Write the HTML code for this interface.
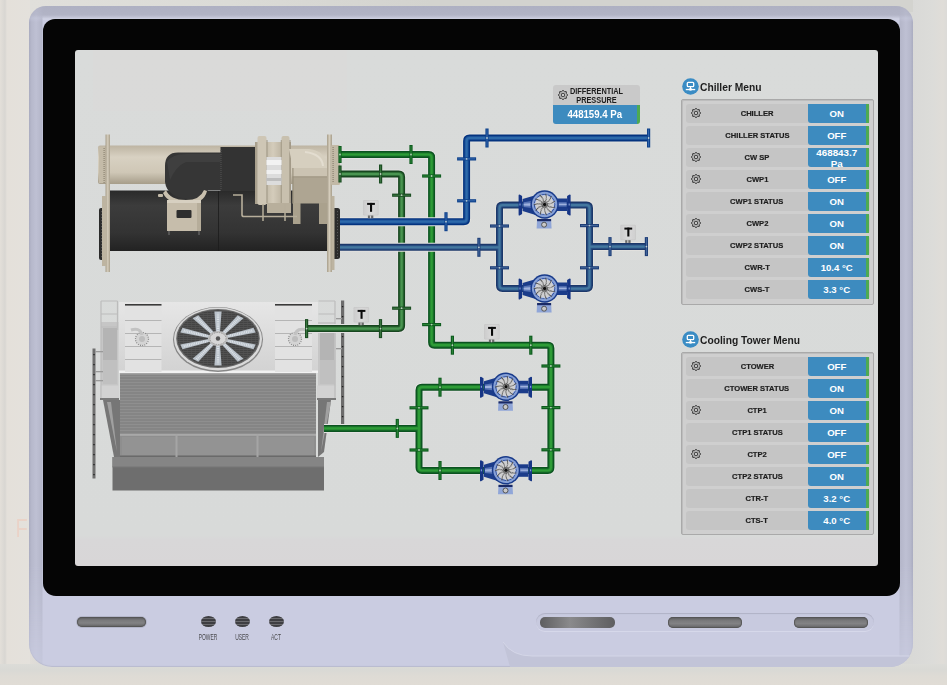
<!DOCTYPE html>
<html><head><meta charset="utf-8">
<style>
*{box-sizing:border-box}
html,body{margin:0;padding:0}
body{width:947px;height:685px;overflow:hidden;position:relative;background:#dcdcd8;font-family:"Liberation Sans",sans-serif}
.a{position:absolute}
.tbl{position:absolute;left:681px;width:193px;background:#cfcfcf;border:1px solid #a9a9a9;border-radius:2px;box-shadow:inset 1px 1px 0 #bdbdbd}
.row{position:absolute;left:4px;width:184px;height:19px;background:#c5c5c5;border-radius:3px}
.lbl{position:absolute;left:20px;width:102px;top:0.4px;height:19px;line-height:19px;text-align:center;font-size:7.9px;font-weight:bold;color:#1e1e1e;white-space:nowrap;-webkit-text-stroke:0.2px #1e1e1e}
.lbl span{display:inline-block;transform:scaleX(.96)}
.val{position:absolute;left:122px;top:0;width:57.5px;height:19px;background:#3d8bbf;border-radius:0 0 0 3px;color:#fff;font-weight:bold;font-size:9.6px;line-height:20px;text-align:center;overflow:hidden;white-space:nowrap}
.val.two{line-height:11.5px;padding-top:0;font-size:9.8px}
.strip{position:absolute;left:179.5px;top:0;width:3.5px;height:19px;background:#4eaa52}
.gear{position:absolute;left:3.5px;top:3.2px;width:12px;height:12px}
.hdr{position:absolute;left:682px;height:17px;font-size:10.8px;font-weight:bold;color:#1e1e1e;line-height:19px}
.hdr .ic{position:absolute;left:-0.5px;top:0;width:17px;height:17px}
.hdr span{position:absolute;left:18px;top:0;white-space:nowrap;display:inline-block;transform-origin:0 50%;transform:scaleX(.95)}
</style></head>
<body>
<!-- background -->
<div class="a" style="left:0;top:0;width:947px;height:685px;background:linear-gradient(90deg,#e2ded8 0,#e4e0da 24px,#dcdad6 40px,#d6d6d3 300px,#d8d8d5 880px,#dadad7 947px)"></div>
<div class="a" style="left:30px;top:0;width:917px;height:12px;background:linear-gradient(90deg,#e0dfdb 0,#dbdbd7 200px,#d3d3cf 400px,#d3d3cf 100%)"></div>
<div class="a" style="left:0;top:0;width:30px;height:685px;background:linear-gradient(90deg,#e3dfd9 0,#d8d6d2 5px,#e4e0da 7px,#e4e1dc 30px)"></div>
<div class="a" style="left:913px;top:0;width:34px;height:685px;background:linear-gradient(90deg,#d9d9d7 0,#dcdcd9 20px,#e0ddd8 30px,#dcdbd8 34px)"></div>
<div class="a" style="left:0;top:664px;width:947px;height:21px;background:linear-gradient(180deg,#dcdcd8 0,#d9d9d5 6px,#dedbd5 12px,#e0dcd5 100%)"></div>
<div class="a" style="left:14px;top:516px;font-size:25px;line-height:25px;color:#f0c8b8;opacity:.55;font-family:'Liberation Sans',sans-serif;transform:scaleX(.8)">F</div>
<!-- device frame -->
<div class="a" style="left:29px;top:5.5px;width:884px;height:661px;border-radius:17px 17px 23px 23px;background-color:#cacce1;background-image:linear-gradient(180deg,#aeb0c2 0,#b2b4c6 9px,#c4c6d8 11.5px,#d0d2e3 13px,rgba(202,204,225,0) 14.5px);box-shadow:inset 0 -1px 1px #b9bbcf;overflow:hidden"><div class="a" style="left:0;top:0;width:884px;height:661px;background:linear-gradient(90deg,#aaacc0 0,#b6b8cb 2.5px,#bec0d3 7px,#b4b6c9 13px,rgba(202,204,225,0) 14px,rgba(202,204,225,0) 870px,#b4b6c9 871px,#bec0d3 877px,#b6b8cb 881.5px,#aaacc0 884px);-webkit-mask-image:linear-gradient(180deg,rgba(0,0,0,.3) 0,rgba(0,0,0,.5) 10px,#000 16px,#000 560px,rgba(0,0,0,.35) 640px,rgba(0,0,0,.2) 661px);mask-image:linear-gradient(180deg,rgba(0,0,0,.3) 0,rgba(0,0,0,.5) 10px,#000 16px,#000 560px,rgba(0,0,0,.35) 640px,rgba(0,0,0,.2) 661px)"></div><svg class="a" style="left:0;top:0" width="884" height="661" viewBox="29 5 884 661"><path d="M503,641 Q512,655 532,655 L913,655 L913,666 L510,666 Z" fill="#c2c4d8"/><path d="M503,641 Q512,655 532,655 L913,655" fill="none" stroke="#d4d6e7" stroke-width="1"/></svg></div>
<div class="a" style="left:42.5px;top:18.7px;width:857.5px;height:577.3px;border-radius:12px 12px 13px 13px;background:#050505"></div>
<div class="a" style="left:75px;top:50px;width:803px;height:516px;border-radius:3px;background:linear-gradient(180deg,#d9dbda 0,#d8dad9 485px,#d8d7d8 490px,#d8d6d7 100%)"></div>
<div class="a" style="left:93px;top:50px;width:254px;height:61px;background:#dad8d8;opacity:.55"></div>

<!-- bottom controls -->
<div class="a" style="left:76px;top:616px;width:71px;height:12px;border-radius:6px;background:#b4b6ca"></div>
<div class="a" style="left:77px;top:617px;width:69px;height:10px;border-radius:5px;background:linear-gradient(180deg,#5e5e60 0,#7a7a7c 35%,#828284 60%,#646466 100%);box-shadow:inset 0 0 1px 1px #555"></div>

<div class="a" style="left:535.5px;top:612.5px;width:338px;height:18.5px;border-radius:9.5px;background:#c8cadf;box-shadow:inset 0 1px 1px #b0b2c6,0 1px 0 #d6d8ea"></div>
<div class="a" style="left:540px;top:617px;width:75px;height:10.5px;border-radius:5px;background:linear-gradient(90deg,#5e5e60,#8a8a8c 40%,#6c6c6e 80%,#5e5e60)"></div>
<div class="a" style="left:667.5px;top:617px;width:74.5px;height:10.5px;border-radius:5px;background:linear-gradient(180deg,#5e5e60 0,#7a7a7c 35%,#828284 60%,#646466 100%);box-shadow:inset 0 0 1px 1px #555"></div>
<div class="a" style="left:794px;top:617px;width:74px;height:10.5px;border-radius:5px;background:linear-gradient(180deg,#5e5e60 0,#7a7a7c 35%,#828284 60%,#646466 100%);box-shadow:inset 0 0 1px 1px #555"></div>
<div class="a" style="left:200.5px;top:616px;width:15px;height:11px;border-radius:50%;background:repeating-linear-gradient(180deg,#3e3e42 0,#3e3e42 2px,#6a6a6e 2px,#6a6a6e 3px)"></div>
<div class="a" style="left:234.5px;top:616px;width:15px;height:11px;border-radius:50%;background:repeating-linear-gradient(180deg,#3e3e42 0,#3e3e42 2px,#6a6a6e 2px,#6a6a6e 3px)"></div>
<div class="a" style="left:268.5px;top:616px;width:15px;height:11px;border-radius:50%;background:repeating-linear-gradient(180deg,#3e3e42 0,#3e3e42 2px,#6a6a6e 2px,#6a6a6e 3px)"></div>
<div class="a" style="left:188px;top:631.5px;width:40px;text-align:center;font-size:9.5px;line-height:9px;color:#4a4a4e;transform:scaleX(.52)">POWER</div>
<div class="a" style="left:222px;top:631.5px;width:40px;text-align:center;font-size:9.5px;line-height:9px;color:#4a4a4e;transform:scaleX(.52)">USER</div>
<div class="a" style="left:256px;top:631.5px;width:40px;text-align:center;font-size:9.5px;line-height:9px;color:#4a4a4e;transform:scaleX(.52)">ACT</div>

<!-- DIAGRAM -->
<svg class="a" style="left:0;top:0" width="947" height="685" viewBox="0 0 947 685">
<defs>
<linearGradient id="tgrad" x1="0" y1="0" x2="1" y2="0"><stop offset="0" stop-color="#cdcdcd"/><stop offset="0.5" stop-color="#dadada"/><stop offset="1" stop-color="#d0d0d0"/></linearGradient>
<linearGradient id="beige" x1="0" y1="0" x2="0" y2="1"><stop offset="0" stop-color="#bdb4a2"/><stop offset="0.3" stop-color="#d8d1c2"/><stop offset="0.7" stop-color="#cfc7b6"/><stop offset="1" stop-color="#a69d8a"/></linearGradient>
<linearGradient id="beigeV" x1="0" y1="0" x2="1" y2="0"><stop offset="0" stop-color="#a79e8b"/><stop offset="0.5" stop-color="#d4ccbb"/><stop offset="1" stop-color="#a79e8b"/></linearGradient>
<linearGradient id="dark" x1="0" y1="0" x2="0" y2="1"><stop offset="0" stop-color="#2a2a2a"/><stop offset="0.25" stop-color="#3c3c3c"/><stop offset="0.7" stop-color="#333"/><stop offset="1" stop-color="#222"/></linearGradient>
<linearGradient id="louv" x1="0" y1="0" x2="0" y2="1"><stop offset="0" stop-color="#7b7b7b"/><stop offset="1" stop-color="#8e8e8e"/></linearGradient>
<pattern id="louvp" x="0" y="372.5" width="4" height="3" patternUnits="userSpaceOnUse"><rect width="4" height="3" fill="#8f8f8f"/><rect y="2" width="4" height="1" fill="#7b7b7b"/></pattern>
<linearGradient id="deck" x1="0" y1="0" x2="0" y2="1"><stop offset="0" stop-color="#e6e6e6"/><stop offset="1" stop-color="#d2d2d2"/></linearGradient>
<linearGradient id="base" x1="0" y1="0" x2="0" y2="1"><stop offset="0" stop-color="#7e7e7e"/><stop offset="1" stop-color="#6c6c6c"/></linearGradient>
</defs>
<g id="chiller">
<rect x="98" y="145.5" width="242" height="38.5" rx="2" fill="url(#beige)"/>
<rect x="99" y="147" width="8" height="36" fill="#c4bba8"/>
<rect x="103.5" y="148" width="1.2" height="1" fill="#8d8472"/>
<rect x="103.5" y="150" width="1.2" height="1" fill="#8d8472"/>
<rect x="103.5" y="152" width="1.2" height="1" fill="#8d8472"/>
<rect x="103.5" y="154" width="1.2" height="1" fill="#8d8472"/>
<rect x="103.5" y="156" width="1.2" height="1" fill="#8d8472"/>
<rect x="103.5" y="158" width="1.2" height="1" fill="#8d8472"/>
<rect x="103.5" y="160" width="1.2" height="1" fill="#8d8472"/>
<rect x="103.5" y="162" width="1.2" height="1" fill="#8d8472"/>
<rect x="103.5" y="164" width="1.2" height="1" fill="#8d8472"/>
<rect x="103.5" y="166" width="1.2" height="1" fill="#8d8472"/>
<rect x="103.5" y="168" width="1.2" height="1" fill="#8d8472"/>
<rect x="103.5" y="170" width="1.2" height="1" fill="#8d8472"/>
<rect x="103.5" y="172" width="1.2" height="1" fill="#8d8472"/>
<rect x="103.5" y="174" width="1.2" height="1" fill="#8d8472"/>
<rect x="103.5" y="176" width="1.2" height="1" fill="#8d8472"/>
<rect x="103.5" y="178" width="1.2" height="1" fill="#8d8472"/>
<rect x="103.5" y="180" width="1.2" height="1" fill="#8d8472"/>
<rect x="103.5" y="182" width="1.2" height="1" fill="#8d8472"/>
<rect x="108" y="190.5" width="222" height="60.5" fill="url(#dark)"/>
<rect x="218" y="191" width="0.8" height="60" fill="#1c1c1c"/>
<rect x="99" y="208" width="10" height="52" rx="2" fill="#2b2b2b"/>
<rect x="331" y="208" width="9" height="51" rx="2.5" fill="#2b2b2b"/>
<rect x="101" y="211" width="1" height="1.2" fill="#555"/>
<rect x="337" y="211" width="1" height="1.2" fill="#555"/>
<rect x="101" y="214" width="1" height="1.2" fill="#555"/>
<rect x="337" y="214" width="1" height="1.2" fill="#555"/>
<rect x="101" y="217" width="1" height="1.2" fill="#555"/>
<rect x="337" y="217" width="1" height="1.2" fill="#555"/>
<rect x="101" y="220" width="1" height="1.2" fill="#555"/>
<rect x="337" y="220" width="1" height="1.2" fill="#555"/>
<rect x="101" y="223" width="1" height="1.2" fill="#555"/>
<rect x="337" y="223" width="1" height="1.2" fill="#555"/>
<rect x="101" y="226" width="1" height="1.2" fill="#555"/>
<rect x="337" y="226" width="1" height="1.2" fill="#555"/>
<rect x="101" y="229" width="1" height="1.2" fill="#555"/>
<rect x="337" y="229" width="1" height="1.2" fill="#555"/>
<rect x="101" y="232" width="1" height="1.2" fill="#555"/>
<rect x="337" y="232" width="1" height="1.2" fill="#555"/>
<rect x="101" y="235" width="1" height="1.2" fill="#555"/>
<rect x="337" y="235" width="1" height="1.2" fill="#555"/>
<rect x="101" y="238" width="1" height="1.2" fill="#555"/>
<rect x="337" y="238" width="1" height="1.2" fill="#555"/>
<rect x="101" y="241" width="1" height="1.2" fill="#555"/>
<rect x="337" y="241" width="1" height="1.2" fill="#555"/>
<rect x="101" y="244" width="1" height="1.2" fill="#555"/>
<rect x="337" y="244" width="1" height="1.2" fill="#555"/>
<rect x="101" y="247" width="1" height="1.2" fill="#555"/>
<rect x="337" y="247" width="1" height="1.2" fill="#555"/>
<rect x="101" y="250" width="1" height="1.2" fill="#555"/>
<rect x="337" y="250" width="1" height="1.2" fill="#555"/>
<rect x="101" y="253" width="1" height="1.2" fill="#555"/>
<rect x="337" y="253" width="1" height="1.2" fill="#555"/>
<rect x="101" y="256" width="1" height="1.2" fill="#555"/>
<rect x="337" y="256" width="1" height="1.2" fill="#555"/>
<rect x="105.5" y="134.5" width="4.5" height="137.5" fill="url(#beigeV)"/>
<rect x="102" y="196" width="4" height="70" fill="#bdb4a1"/>
<rect x="327" y="134.5" width="5" height="137.5" fill="url(#beigeV)"/>
<rect x="331.5" y="196" width="3" height="74" fill="#bcb3a0"/>
<rect x="331.5" y="148" width="1.2" height="1" fill="#8d8472"/>
<rect x="331.5" y="150" width="1.2" height="1" fill="#8d8472"/>
<rect x="331.5" y="152" width="1.2" height="1" fill="#8d8472"/>
<rect x="331.5" y="154" width="1.2" height="1" fill="#8d8472"/>
<rect x="331.5" y="156" width="1.2" height="1" fill="#8d8472"/>
<rect x="331.5" y="158" width="1.2" height="1" fill="#8d8472"/>
<rect x="331.5" y="160" width="1.2" height="1" fill="#8d8472"/>
<rect x="331.5" y="162" width="1.2" height="1" fill="#8d8472"/>
<rect x="331.5" y="164" width="1.2" height="1" fill="#8d8472"/>
<rect x="331.5" y="166" width="1.2" height="1" fill="#8d8472"/>
<rect x="331.5" y="168" width="1.2" height="1" fill="#8d8472"/>
<rect x="331.5" y="170" width="1.2" height="1" fill="#8d8472"/>
<rect x="331.5" y="172" width="1.2" height="1" fill="#8d8472"/>
<rect x="331.5" y="174" width="1.2" height="1" fill="#8d8472"/>
<rect x="331.5" y="176" width="1.2" height="1" fill="#8d8472"/>
<rect x="331.5" y="178" width="1.2" height="1" fill="#8d8472"/>
<rect x="331.5" y="180" width="1.2" height="1" fill="#8d8472"/>
<rect x="331.5" y="182" width="1.2" height="1" fill="#8d8472"/>
<path d="M165,166 Q165,152.5 178,152.5 L221,152.5 L221,190 L208,190 Q204,199 188,199 Q167,197 165,182 Z" fill="#363636"/>
<path d="M167,162 Q172,154 186,154 L221,154 L221,162 L186,162 Q176,166 170,180 Z" fill="#474747" opacity="0.55"/>
<path d="M163,193 Q168,204 186,204 Q204,204 207,191 L204,190 Q200,200 186,200 Q170,200 166,190 Z" fill="#c9c0ae"/>
<rect x="158" y="194" width="5" height="3" rx="1" fill="#c4bba8"/>
<rect x="220.5" y="147" width="34.5" height="44" fill="#333"/>
<rect x="220.5" y="150" width="1" height="1" fill="#555"/>
<rect x="220.5" y="152" width="1" height="1" fill="#555"/>
<rect x="220.5" y="154" width="1" height="1" fill="#555"/>
<rect x="220.5" y="156" width="1" height="1" fill="#555"/>
<rect x="220.5" y="158" width="1" height="1" fill="#555"/>
<rect x="220.5" y="160" width="1" height="1" fill="#555"/>
<rect x="220.5" y="162" width="1" height="1" fill="#555"/>
<rect x="220.5" y="164" width="1" height="1" fill="#555"/>
<rect x="220.5" y="166" width="1" height="1" fill="#555"/>
<rect x="220.5" y="168" width="1" height="1" fill="#555"/>
<rect x="220.5" y="170" width="1" height="1" fill="#555"/>
<rect x="220.5" y="172" width="1" height="1" fill="#555"/>
<rect x="220.5" y="174" width="1" height="1" fill="#555"/>
<rect x="220.5" y="176" width="1" height="1" fill="#555"/>
<rect x="220.5" y="178" width="1" height="1" fill="#555"/>
<rect x="220.5" y="180" width="1" height="1" fill="#555"/>
<rect x="220.5" y="182" width="1" height="1" fill="#555"/>
<rect x="220.5" y="184" width="1" height="1" fill="#555"/>
<rect x="220.5" y="186" width="1" height="1" fill="#555"/>
<rect x="220.5" y="188" width="1" height="1" fill="#555"/>
<rect x="255" y="142" width="36" height="62" fill="url(#beigeV)"/>
<rect x="257.5" y="136" width="9" height="69" rx="2" fill="#cec6b5"/>
<rect x="266.5" y="140" width="1" height="63" fill="#9e9683"/>
<rect x="281.5" y="136" width="8" height="69" rx="2" fill="#c8c0ae"/>
<rect x="280.8" y="140" width="0.9" height="63" fill="#9e9683"/><rect x="289.5" y="140" width="1" height="63" fill="#9e9683"/>
<rect x="266.5" y="157" width="15" height="28" fill="#dcdcdc"/>
<rect x="266.5" y="160" width="15" height="5" fill="#f2f2f2"/><rect x="266.5" y="170" width="15" height="4" fill="#f0f0f0"/><rect x="266.5" y="178" width="15" height="3" fill="#bdbdbd"/>
<rect x="267" y="203" width="24" height="10" fill="#b8af9c"/>
<path d="M289,149 L309,149 Q327,151 327,168 L293,168 Z" fill="#d6cfbf"/>
<path d="M305,152 Q322,154 323,166" fill="none" stroke="#e3ddd0" stroke-width="2"/>
<rect x="292.5" y="168" width="34.5" height="35.5" fill="#aea592"/>
<rect x="292.5" y="168" width="34.5" height="8.5" fill="#cbc3b2"/>
<rect x="292.5" y="168" width="0.9" height="35.5" fill="#8e8572"/>
<rect x="292.5" y="176.5" width="34.5" height="0.8" fill="#978e7b"/>
<rect x="293" y="203" width="7.5" height="21" fill="#aaa18d"/><rect x="319" y="203" width="8" height="21" fill="#aaa18d"/>
<rect x="331" y="145" width="9" height="40" rx="1.5" fill="#c2b9a6"/>
<rect x="332.5" y="147" width="1.2" height="1" fill="#8a8170"/>
<rect x="332.5" y="149" width="1.2" height="1" fill="#8a8170"/>
<rect x="332.5" y="151" width="1.2" height="1" fill="#8a8170"/>
<rect x="332.5" y="153" width="1.2" height="1" fill="#8a8170"/>
<rect x="332.5" y="155" width="1.2" height="1" fill="#8a8170"/>
<rect x="332.5" y="157" width="1.2" height="1" fill="#8a8170"/>
<rect x="332.5" y="159" width="1.2" height="1" fill="#8a8170"/>
<rect x="332.5" y="161" width="1.2" height="1" fill="#8a8170"/>
<rect x="332.5" y="163" width="1.2" height="1" fill="#8a8170"/>
<rect x="332.5" y="165" width="1.2" height="1" fill="#8a8170"/>
<rect x="332.5" y="167" width="1.2" height="1" fill="#8a8170"/>
<rect x="332.5" y="169" width="1.2" height="1" fill="#8a8170"/>
<rect x="332.5" y="171" width="1.2" height="1" fill="#8a8170"/>
<rect x="332.5" y="173" width="1.2" height="1" fill="#8a8170"/>
<rect x="332.5" y="175" width="1.2" height="1" fill="#8a8170"/>
<rect x="332.5" y="177" width="1.2" height="1" fill="#8a8170"/>
<rect x="332.5" y="179" width="1.2" height="1" fill="#8a8170"/>
<rect x="332.5" y="181" width="1.2" height="1" fill="#8a8170"/>
<path d="M233,195 L242,195 L242,215 Q242,216.5 244,216.5 L297,216.5" fill="none" stroke="#b7ae9b" stroke-width="1.6"/>
<path d="M263,204 L263,221 M285,204 L285,221" fill="none" stroke="#b7ae9b" stroke-width="1.5"/>
<rect x="167" y="200" width="34" height="31" fill="#c6bdab"/>
<rect x="167" y="200" width="34" height="3" fill="#d7d0c1"/>
<rect x="197" y="203" width="4" height="28" fill="#b6ad9a"/>
<rect x="176.5" y="210" width="15" height="8" rx="1" fill="#2e2e2e"/>
<rect x="168.5" y="231" width="1" height="4" fill="#777"/><rect x="198.5" y="231" width="1" height="4" fill="#777"/>
</g>
<g id="tower">
<rect x="112.5" y="457" width="211.5" height="33.5" fill="#6e6e6e"/>
<rect x="112.5" y="457" width="211.5" height="10" fill="#858585"/>
<rect x="112.5" y="466.5" width="211.5" height="1" fill="#777"/>
<path d="M103,400 L120,400 L120,457 L114,457 Z" fill="#767676"/>
<path d="M318,400 L331,400 L324,452 L318,457 Z" fill="#767676"/>
<path d="M107,402 L111,402 L117,452 Z" fill="#a0a0a0"/>
<path d="M331,402 L327,402 L321,452 Z" fill="#a0a0a0"/>
<rect x="120" y="372.5" width="196" height="61.5" fill="url(#louvp)"/>
<rect x="120" y="372.5" width="196" height="2" fill="#a5a5a5"/>
<rect x="120" y="434" width="196" height="23" fill="#8e8e8e"/>
<rect x="120" y="434" width="196" height="1.8" fill="#a8a8a8"/>
<rect x="122" y="437" width="192" height="18" fill="#939393"/>
<rect x="120" y="455.5" width="196" height="1.5" fill="#6a6a6a"/>
<rect x="175.5" y="434" width="2" height="23" fill="#a5a5a5"/><rect x="256.5" y="434" width="2" height="23" fill="#a5a5a5"/>
<rect x="101" y="322" width="17.5" height="78" fill="#c6c6c6"/>
<rect x="318" y="322" width="17.5" height="78" fill="#c6c6c6"/>
<rect x="103" y="328" width="14" height="56" fill="#b4b4b4"/>
<rect x="320" y="328" width="14" height="56" fill="#b4b4b4"/>
<rect x="103" y="360" width="14" height="24" fill="#c0c0c0"/><rect x="320" y="360" width="14" height="24" fill="#c0c0c0"/>
<rect x="100" y="385.5" width="19" height="14.5" fill="#d2d2d2"/><rect x="317" y="385.5" width="19" height="14.5" fill="#d2d2d2"/>
<rect x="100" y="398" width="19" height="2" fill="#7a7a7a"/><rect x="317" y="398" width="19" height="2" fill="#7a7a7a"/>
<path d="M101,301 L101,398 M117.5,301 L117.5,330 M101,301 L117.5,301 M101,314 L117.5,314 M101,327 L117.5,327" stroke="#bcbcbc" stroke-width="1.2" fill="none"/>
<path d="M318.5,301 L335,301 M318.5,314 L335,314 M318.5,327 L335,327 M335,301 L335,398" stroke="#bcbcbc" stroke-width="1.2" fill="none"/>
<rect x="119" y="302" width="199" height="71" fill="url(#deck)"/>
<rect x="119" y="370.5" width="199" height="2.5" fill="#f2f2f2"/>
<rect x="125" y="304" width="36.5" height="68" fill="#e2e2e2"/>
<rect x="275" y="304" width="37" height="68" fill="#e2e2e2"/>
<rect x="125" y="320" width="36.5" height="0.9" fill="#b0b0b0"/>
<rect x="275" y="320" width="37" height="0.9" fill="#b0b0b0"/>
<rect x="125" y="333" width="36.5" height="0.9" fill="#b0b0b0"/>
<rect x="275" y="333" width="37" height="0.9" fill="#b0b0b0"/>
<rect x="125" y="346" width="36.5" height="0.9" fill="#b0b0b0"/>
<rect x="275" y="346" width="37" height="0.9" fill="#b0b0b0"/>
<rect x="125" y="359" width="36.5" height="0.9" fill="#b0b0b0"/>
<rect x="275" y="359" width="37" height="0.9" fill="#b0b0b0"/>
<rect x="125" y="304" width="36.5" height="1.6" fill="#3a3a3a"/><rect x="275" y="304" width="37" height="1.6" fill="#3a3a3a"/>
<circle cx="142" cy="339" r="6.5" fill="#d4d4d4" stroke="#8a8a8a" stroke-width="1.2" stroke-dasharray="1 1.2"/>
<circle cx="142" cy="339" r="3" fill="#bdbdbd"/>
<path d="M131,330 Q140,327 142,335" stroke="#c2c2c2" stroke-width="3" fill="none"/>
<circle cx="295" cy="339" r="6.5" fill="#d4d4d4" stroke="#8a8a8a" stroke-width="1.2" stroke-dasharray="1 1.2"/>
<circle cx="295" cy="339" r="3" fill="#bdbdbd"/>
<path d="M307,330 Q297,327 295,335" stroke="#c2c2c2" stroke-width="3" fill="none"/>
<ellipse cx="218" cy="339.5" rx="45" ry="32.5" fill="#878787"/>
<ellipse cx="218" cy="339" rx="44" ry="31.5" fill="#dadada"/>
<ellipse cx="218" cy="338.5" rx="41.8" ry="29.6" fill="#6a6a6a"/>
<ellipse cx="218" cy="338.5" rx="40.5" ry="28.3" fill="#434343"/>
<clipPath id="fanclip"><ellipse cx="218" cy="338.5" rx="40.5" ry="28.3"/></clipPath>
<g clip-path="url(#fanclip)">
<rect x="177" y="311" width="82" height="0.6" fill="#5c5c5c"/>
<rect x="177" y="313" width="82" height="0.6" fill="#5c5c5c"/>
<rect x="177" y="315" width="82" height="0.6" fill="#5c5c5c"/>
<rect x="177" y="317" width="82" height="0.6" fill="#5c5c5c"/>
<rect x="177" y="319" width="82" height="0.6" fill="#5c5c5c"/>
<rect x="177" y="321" width="82" height="0.6" fill="#5c5c5c"/>
<rect x="177" y="323" width="82" height="0.6" fill="#5c5c5c"/>
<rect x="177" y="325" width="82" height="0.6" fill="#5c5c5c"/>
<rect x="177" y="327" width="82" height="0.6" fill="#5c5c5c"/>
<rect x="177" y="329" width="82" height="0.6" fill="#5c5c5c"/>
<rect x="177" y="331" width="82" height="0.6" fill="#5c5c5c"/>
<rect x="177" y="333" width="82" height="0.6" fill="#5c5c5c"/>
<rect x="177" y="335" width="82" height="0.6" fill="#5c5c5c"/>
<rect x="177" y="337" width="82" height="0.6" fill="#5c5c5c"/>
<rect x="177" y="339" width="82" height="0.6" fill="#5c5c5c"/>
<rect x="177" y="341" width="82" height="0.6" fill="#5c5c5c"/>
<rect x="177" y="343" width="82" height="0.6" fill="#5c5c5c"/>
<rect x="177" y="345" width="82" height="0.6" fill="#5c5c5c"/>
<rect x="177" y="347" width="82" height="0.6" fill="#5c5c5c"/>
<rect x="177" y="349" width="82" height="0.6" fill="#5c5c5c"/>
<rect x="177" y="351" width="82" height="0.6" fill="#5c5c5c"/>
<rect x="177" y="353" width="82" height="0.6" fill="#5c5c5c"/>
<rect x="177" y="355" width="82" height="0.6" fill="#5c5c5c"/>
<rect x="177" y="357" width="82" height="0.6" fill="#5c5c5c"/>
<rect x="177" y="359" width="82" height="0.6" fill="#5c5c5c"/>
<rect x="177" y="361" width="82" height="0.6" fill="#5c5c5c"/>
<rect x="177" y="363" width="82" height="0.6" fill="#5c5c5c"/>
<rect x="177" y="365" width="82" height="0.6" fill="#5c5c5c"/>
<rect x="177" y="367" width="82" height="0.6" fill="#5c5c5c"/>
<rect x="179" y="310" width="0.5" height="58" fill="#555"/>
<rect x="183" y="310" width="0.5" height="58" fill="#555"/>
<rect x="187" y="310" width="0.5" height="58" fill="#555"/>
<rect x="191" y="310" width="0.5" height="58" fill="#555"/>
<rect x="195" y="310" width="0.5" height="58" fill="#555"/>
<rect x="199" y="310" width="0.5" height="58" fill="#555"/>
<rect x="203" y="310" width="0.5" height="58" fill="#555"/>
<rect x="207" y="310" width="0.5" height="58" fill="#555"/>
<rect x="211" y="310" width="0.5" height="58" fill="#555"/>
<rect x="215" y="310" width="0.5" height="58" fill="#555"/>
<rect x="219" y="310" width="0.5" height="58" fill="#555"/>
<rect x="223" y="310" width="0.5" height="58" fill="#555"/>
<rect x="227" y="310" width="0.5" height="58" fill="#555"/>
<rect x="231" y="310" width="0.5" height="58" fill="#555"/>
<rect x="235" y="310" width="0.5" height="58" fill="#555"/>
<rect x="239" y="310" width="0.5" height="58" fill="#555"/>
<rect x="243" y="310" width="0.5" height="58" fill="#555"/>
<rect x="247" y="310" width="0.5" height="58" fill="#555"/>
<rect x="251" y="310" width="0.5" height="58" fill="#555"/>
<rect x="255" y="310" width="0.5" height="58" fill="#555"/>
</g>
<polygon points="216.0,332.2 214.4,311.6 221.6,311.6 220.0,332.2" fill="#b9c1c9"/>
<line x1="218.0" y1="330.8" x2="218.0" y2="312.6" stroke="#e4e9ee" stroke-width="2.4" stroke-dasharray="0.9 0.9" opacity="0.85"/>
<polygon points="221.7,332.6 237.7,315.2 243.5,318.2 224.9,334.2" fill="#b9c1c9"/>
<line x1="224.5" y1="332.3" x2="239.7" y2="317.5" stroke="#e4e9ee" stroke-width="2.4" stroke-dasharray="0.9 0.9" opacity="0.85"/>
<polygon points="225.9,335.2 253.5,327.8 255.7,332.6 227.2,337.9" fill="#b9c1c9"/>
<line x1="228.5" y1="336.1" x2="253.2" y2="330.5" stroke="#e4e9ee" stroke-width="2.4" stroke-dasharray="0.9 0.9" opacity="0.85"/>
<polygon points="227.2,339.1 255.7,344.4 253.5,349.2 225.9,341.8" fill="#b9c1c9"/>
<line x1="228.5" y1="340.9" x2="253.2" y2="346.5" stroke="#e4e9ee" stroke-width="2.4" stroke-dasharray="0.9 0.9" opacity="0.85"/>
<polygon points="224.9,342.8 243.5,358.8 237.7,361.8 221.7,344.4" fill="#b9c1c9"/>
<line x1="224.5" y1="344.7" x2="239.7" y2="359.5" stroke="#e4e9ee" stroke-width="2.4" stroke-dasharray="0.9 0.9" opacity="0.85"/>
<polygon points="220.0,344.8 221.6,365.4 214.4,365.4 216.0,344.8" fill="#b9c1c9"/>
<line x1="218.0" y1="346.2" x2="218.0" y2="364.4" stroke="#e4e9ee" stroke-width="2.4" stroke-dasharray="0.9 0.9" opacity="0.85"/>
<polygon points="214.3,344.4 198.3,361.8 192.5,358.8 211.1,342.8" fill="#b9c1c9"/>
<line x1="211.5" y1="344.7" x2="196.3" y2="359.5" stroke="#e4e9ee" stroke-width="2.4" stroke-dasharray="0.9 0.9" opacity="0.85"/>
<polygon points="210.1,341.8 182.5,349.2 180.3,344.4 208.8,339.1" fill="#b9c1c9"/>
<line x1="207.5" y1="340.9" x2="182.8" y2="346.5" stroke="#e4e9ee" stroke-width="2.4" stroke-dasharray="0.9 0.9" opacity="0.85"/>
<polygon points="208.8,337.9 180.3,332.6 182.5,327.8 210.1,335.2" fill="#b9c1c9"/>
<line x1="207.5" y1="336.1" x2="182.8" y2="330.5" stroke="#e4e9ee" stroke-width="2.4" stroke-dasharray="0.9 0.9" opacity="0.85"/>
<polygon points="211.1,334.2 192.5,318.2 198.3,315.2 214.3,332.6" fill="#b9c1c9"/>
<line x1="211.5" y1="332.3" x2="196.3" y2="317.5" stroke="#e4e9ee" stroke-width="2.4" stroke-dasharray="0.9 0.9" opacity="0.85"/>
<ellipse cx="218" cy="338.5" rx="10" ry="7.5" fill="#bdbdbd"/>
<ellipse cx="218" cy="338.5" rx="8" ry="6" fill="#d6d6d6" stroke="#8a8a8a" stroke-width="0.8" stroke-dasharray="1.2 1.2"/>
<circle cx="218" cy="338.5" r="2.2" fill="#555"/>
<rect x="92.5" y="348.5" width="3" height="130" fill="#6f6f6f"/>
<rect x="95" y="351" width="8" height="1.3" fill="#9a9a9a"/><rect x="95" y="371" width="8" height="1.3" fill="#9a9a9a"/><rect x="95" y="380" width="8" height="1.3" fill="#9a9a9a"/>
<rect x="93.3" y="354" width="1.4" height="1.2" fill="#222"/>
<rect x="93.3" y="364" width="1.4" height="1.2" fill="#222"/>
<rect x="93.3" y="374" width="1.4" height="1.2" fill="#222"/>
<rect x="93.3" y="384" width="1.4" height="1.2" fill="#222"/>
<rect x="93.3" y="394" width="1.4" height="1.2" fill="#222"/>
<rect x="93.3" y="404" width="1.4" height="1.2" fill="#222"/>
<rect x="93.3" y="414" width="1.4" height="1.2" fill="#222"/>
<rect x="93.3" y="424" width="1.4" height="1.2" fill="#222"/>
<rect x="93.3" y="434" width="1.4" height="1.2" fill="#222"/>
<rect x="93.3" y="444" width="1.4" height="1.2" fill="#222"/>
<rect x="93.3" y="454" width="1.4" height="1.2" fill="#222"/>
<rect x="93.3" y="464" width="1.4" height="1.2" fill="#222"/>
<rect x="93.3" y="474" width="1.4" height="1.2" fill="#222"/>
<rect x="341" y="300.5" width="3.2" height="129" fill="#6c6c6c"/>
<rect x="336" y="318" width="6" height="1.3" fill="#9a9a9a"/><rect x="336" y="348" width="6" height="1.3" fill="#9a9a9a"/>
<rect x="341.9" y="306" width="1.4" height="1.2" fill="#222"/>
<rect x="341.9" y="316" width="1.4" height="1.2" fill="#222"/>
<rect x="341.9" y="326" width="1.4" height="1.2" fill="#222"/>
<rect x="341.9" y="336" width="1.4" height="1.2" fill="#222"/>
<rect x="341.9" y="346" width="1.4" height="1.2" fill="#222"/>
<rect x="341.9" y="356" width="1.4" height="1.2" fill="#222"/>
<rect x="341.9" y="366" width="1.4" height="1.2" fill="#222"/>
<rect x="341.9" y="376" width="1.4" height="1.2" fill="#222"/>
<rect x="341.9" y="386" width="1.4" height="1.2" fill="#222"/>
<rect x="341.9" y="396" width="1.4" height="1.2" fill="#222"/>
<rect x="341.9" y="406" width="1.4" height="1.2" fill="#222"/>
<rect x="341.9" y="416" width="1.4" height="1.2" fill="#222"/>
<rect x="341.9" y="426" width="1.4" height="1.2" fill="#222"/>
</g>
<path d="M340,154.5 L428.6,154.5 Q431.6,154.5 431.6,157.5 L431.6,342.2 Q431.6,345.2 434.6,345.2 L547.9,345.2 Q550.9,345.2 550.9,348.2 L550.9,467.5 Q550.9,470.5 547.9,470.5 L422.0,470.5 Q419,470.5 419.0,467.5 L419.0,390.2 Q419,387.2 422.0,387.2 L550.9,387.2" fill="none" stroke="#e4e2e3" stroke-width="9" stroke-linejoin="round"/>
<path d="M324,428.4 L419,428.4" fill="none" stroke="#e4e2e3" stroke-width="9" stroke-linejoin="round"/>
<path d="M340,154.5 L428.6,154.5 Q431.6,154.5 431.6,157.5 L431.6,342.2 Q431.6,345.2 434.6,345.2 L547.9,345.2 Q550.9,345.2 550.9,348.2 L550.9,467.5 Q550.9,470.5 547.9,470.5 L422.0,470.5 Q419,470.5 419.0,467.5 L419.0,390.2 Q419,387.2 422.0,387.2 L550.9,387.2" fill="none" stroke="#0b5320" stroke-width="7" stroke-linejoin="round"/>
<path d="M324,428.4 L419,428.4" fill="none" stroke="#0b5320" stroke-width="7" stroke-linejoin="round"/>
<path d="M340,154.5 L428.6,154.5 Q431.6,154.5 431.6,157.5 L431.6,342.2 Q431.6,345.2 434.6,345.2 L547.9,345.2 Q550.9,345.2 550.9,348.2 L550.9,467.5 Q550.9,470.5 547.9,470.5 L422.0,470.5 Q419,470.5 419.0,467.5 L419.0,390.2 Q419,387.2 422.0,387.2 L550.9,387.2" fill="none" stroke="#1d7a2c" stroke-width="4.2" stroke-linejoin="round"/>
<path d="M324,428.4 L419,428.4" fill="none" stroke="#1d7a2c" stroke-width="4.2" stroke-linejoin="round"/>
<path d="M340,154.5 L428.6,154.5 Q431.6,154.5 431.6,157.5 L431.6,342.2 Q431.6,345.2 434.6,345.2 L547.9,345.2 Q550.9,345.2 550.9,348.2 L550.9,467.5 Q550.9,470.5 547.9,470.5 L422.0,470.5 Q419,470.5 419.0,467.5 L419.0,390.2 Q419,387.2 422.0,387.2 L550.9,387.2" fill="none" stroke="#2e9c37" stroke-width="2.2" stroke-linejoin="round"/>
<path d="M324,428.4 L419,428.4" fill="none" stroke="#2e9c37" stroke-width="2.2" stroke-linejoin="round"/>
<path d="M340,174 L398.6,174.0 Q401.6,174 401.6,177.0 L401.6,325.6 Q401.6,328.6 398.6,328.6 L306.6,328.6" fill="none" stroke="#e3e1e2" stroke-width="9" stroke-linejoin="round"/>
<path d="M340,174 L398.6,174.0 Q401.6,174 401.6,177.0 L401.6,325.6 Q401.6,328.6 398.6,328.6 L306.6,328.6" fill="none" stroke="#17461f" stroke-width="7" stroke-linejoin="round"/>
<path d="M340,174 L398.6,174.0 Q401.6,174 401.6,177.0 L401.6,325.6 Q401.6,328.6 398.6,328.6 L306.6,328.6" fill="none" stroke="#2c6d34" stroke-width="4.2" stroke-linejoin="round"/>
<path d="M340,174 L398.6,174.0 Q401.6,174 401.6,177.0 L401.6,325.6 Q401.6,328.6 398.6,328.6 L306.6,328.6" fill="none" stroke="#4a9551" stroke-width="2.2" stroke-linejoin="round"/>
<path d="M340,247.3 L499.5,247.3" fill="none" stroke="#e2e1de" stroke-width="9" stroke-linejoin="round"/>
<path d="M544.6,205.1 L586.5,205.1 Q589.5,205.1 589.5,208.1 L589.5,285.6 Q589.5,288.6 586.5,288.6 L502.5,288.6 Q499.5,288.6 499.5,285.6 L499.5,208.1 Q499.5,205.1 502.5,205.1 L544.6,205.1" fill="none" stroke="#e2e1de" stroke-width="9" stroke-linejoin="round"/>
<path d="M589.5,246.6 L646.4,246.6" fill="none" stroke="#e2e1de" stroke-width="9" stroke-linejoin="round"/>
<path d="M340,247.3 L499.5,247.3" fill="none" stroke="#1c386a" stroke-width="7" stroke-linejoin="round"/>
<path d="M544.6,205.1 L586.5,205.1 Q589.5,205.1 589.5,208.1 L589.5,285.6 Q589.5,288.6 586.5,288.6 L502.5,288.6 Q499.5,288.6 499.5,285.6 L499.5,208.1 Q499.5,205.1 502.5,205.1 L544.6,205.1" fill="none" stroke="#1c386a" stroke-width="7" stroke-linejoin="round"/>
<path d="M589.5,246.6 L646.4,246.6" fill="none" stroke="#1c386a" stroke-width="7" stroke-linejoin="round"/>
<path d="M340,247.3 L499.5,247.3" fill="none" stroke="#2b5388" stroke-width="4.2" stroke-linejoin="round"/>
<path d="M544.6,205.1 L586.5,205.1 Q589.5,205.1 589.5,208.1 L589.5,285.6 Q589.5,288.6 586.5,288.6 L502.5,288.6 Q499.5,288.6 499.5,285.6 L499.5,208.1 Q499.5,205.1 502.5,205.1 L544.6,205.1" fill="none" stroke="#2b5388" stroke-width="4.2" stroke-linejoin="round"/>
<path d="M589.5,246.6 L646.4,246.6" fill="none" stroke="#2b5388" stroke-width="4.2" stroke-linejoin="round"/>
<path d="M340,247.3 L499.5,247.3" fill="none" stroke="#44789f" stroke-width="2.2" stroke-linejoin="round"/>
<path d="M544.6,205.1 L586.5,205.1 Q589.5,205.1 589.5,208.1 L589.5,285.6 Q589.5,288.6 586.5,288.6 L502.5,288.6 Q499.5,288.6 499.5,285.6 L499.5,208.1 Q499.5,205.1 502.5,205.1 L544.6,205.1" fill="none" stroke="#44789f" stroke-width="2.2" stroke-linejoin="round"/>
<path d="M589.5,246.6 L646.4,246.6" fill="none" stroke="#44789f" stroke-width="2.2" stroke-linejoin="round"/>
<path d="M340,221.7 L463.6,221.7 Q466.6,221.7 466.6,218.7 L466.6,141.0 Q466.6,138 469.6,138.0 L648.6,138" fill="none" stroke="#e4e3df" stroke-width="9" stroke-linejoin="round"/>
<path d="M340,221.7 L463.6,221.7 Q466.6,221.7 466.6,218.7 L466.6,141.0 Q466.6,138 469.6,138.0 L648.6,138" fill="none" stroke="#03337f" stroke-width="7" stroke-linejoin="round"/>
<path d="M340,221.7 L463.6,221.7 Q466.6,221.7 466.6,218.7 L466.6,141.0 Q466.6,138 469.6,138.0 L648.6,138" fill="none" stroke="#1a4f98" stroke-width="4.2" stroke-linejoin="round"/>
<path d="M340,221.7 L463.6,221.7 Q466.6,221.7 466.6,218.7 L466.6,141.0 Q466.6,138 469.6,138.0 L648.6,138" fill="none" stroke="#2d6aaa" stroke-width="2.2" stroke-linejoin="round"/>
<rect x="409.4" y="145.0" width="3.2" height="19" fill="#0e5c1f"/>
<rect x="410.6" y="146.0" width="0.8" height="17" fill="#4ab052" opacity="0.6"/>
<circle cx="411" cy="154.5" r="0.9" fill="#dfe8df" opacity="0.8"/>
<rect x="395.7" y="418.9" width="3.2" height="19" fill="#0e5c1f"/>
<rect x="396.90000000000003" y="419.9" width="0.8" height="17" fill="#4ab052" opacity="0.6"/>
<circle cx="397.3" cy="428.4" r="0.9" fill="#dfe8df" opacity="0.8"/>
<rect x="450.79999999999995" y="335.7" width="3.2" height="19" fill="#0e5c1f"/>
<rect x="452.0" y="336.7" width="0.8" height="17" fill="#4ab052" opacity="0.6"/>
<circle cx="452.4" cy="345.2" r="0.9" fill="#dfe8df" opacity="0.8"/>
<rect x="529.1999999999999" y="335.7" width="3.2" height="19" fill="#0e5c1f"/>
<rect x="530.4" y="336.7" width="0.8" height="17" fill="#4ab052" opacity="0.6"/>
<circle cx="530.8" cy="345.2" r="0.9" fill="#dfe8df" opacity="0.8"/>
<rect x="438.4" y="377.7" width="3.2" height="19" fill="#0e5c1f"/>
<rect x="439.6" y="378.7" width="0.8" height="17" fill="#4ab052" opacity="0.6"/>
<circle cx="440" cy="387.2" r="0.9" fill="#dfe8df" opacity="0.8"/>
<rect x="438.4" y="461.0" width="3.2" height="19" fill="#0e5c1f"/>
<rect x="439.6" y="462.0" width="0.8" height="17" fill="#4ab052" opacity="0.6"/>
<circle cx="440" cy="470.5" r="0.9" fill="#dfe8df" opacity="0.8"/>
<rect x="422.1" y="174.4" width="19" height="3.2" fill="#0e5c1f"/>
<rect x="423.1" y="175.6" width="17" height="0.8" fill="#4ab052" opacity="0.6"/>
<circle cx="431.6" cy="176" r="0.9" fill="#dfe8df" opacity="0.8"/>
<rect x="422.1" y="323.0" width="19" height="3.2" fill="#0e5c1f"/>
<rect x="423.1" y="324.20000000000005" width="17" height="0.8" fill="#4ab052" opacity="0.6"/>
<circle cx="431.6" cy="324.6" r="0.9" fill="#dfe8df" opacity="0.8"/>
<rect x="541.4" y="364.4" width="19" height="3.2" fill="#0e5c1f"/>
<rect x="542.4" y="365.6" width="17" height="0.8" fill="#4ab052" opacity="0.6"/>
<circle cx="550.9" cy="366" r="0.9" fill="#dfe8df" opacity="0.8"/>
<rect x="541.4" y="406.0" width="19" height="3.2" fill="#0e5c1f"/>
<rect x="542.4" y="407.20000000000005" width="17" height="0.8" fill="#4ab052" opacity="0.6"/>
<circle cx="550.9" cy="407.6" r="0.9" fill="#dfe8df" opacity="0.8"/>
<rect x="541.4" y="448.2" width="19" height="3.2" fill="#0e5c1f"/>
<rect x="542.4" y="449.40000000000003" width="17" height="0.8" fill="#4ab052" opacity="0.6"/>
<circle cx="550.9" cy="449.8" r="0.9" fill="#dfe8df" opacity="0.8"/>
<rect x="409.5" y="406.2" width="19" height="3.2" fill="#0e5c1f"/>
<rect x="410.5" y="407.40000000000003" width="17" height="0.8" fill="#4ab052" opacity="0.6"/>
<circle cx="419" cy="407.8" r="0.9" fill="#dfe8df" opacity="0.8"/>
<rect x="409.5" y="448.4" width="19" height="3.2" fill="#0e5c1f"/>
<rect x="410.5" y="449.6" width="17" height="0.8" fill="#4ab052" opacity="0.6"/>
<circle cx="419" cy="450" r="0.9" fill="#dfe8df" opacity="0.8"/>
<rect x="338.4" y="146.0" width="3.2" height="17" fill="#0e5c1f"/>
<rect x="339.6" y="147.0" width="0.8" height="15" fill="#4ab052" opacity="0.6"/>
<circle cx="340" cy="154.5" r="0.9" fill="#dfe8df" opacity="0.8"/>
<rect x="379.0" y="164.5" width="3.2" height="19" fill="#1b4d22"/>
<rect x="380.20000000000005" y="165.5" width="0.8" height="17" fill="#5aa060" opacity="0.6"/>
<circle cx="380.6" cy="174" r="0.9" fill="#dfe8df" opacity="0.8"/>
<rect x="378.9" y="319.1" width="3.2" height="19" fill="#1b4d22"/>
<rect x="380.1" y="320.1" width="0.8" height="17" fill="#5aa060" opacity="0.6"/>
<circle cx="380.5" cy="328.6" r="0.9" fill="#dfe8df" opacity="0.8"/>
<rect x="392.1" y="193.6" width="19" height="3.2" fill="#1b4d22"/>
<rect x="393.1" y="194.79999999999998" width="17" height="0.8" fill="#5aa060" opacity="0.6"/>
<circle cx="401.6" cy="195.2" r="0.9" fill="#dfe8df" opacity="0.8"/>
<rect x="392.1" y="306.59999999999997" width="19" height="3.2" fill="#1b4d22"/>
<rect x="393.1" y="307.8" width="17" height="0.8" fill="#5aa060" opacity="0.6"/>
<circle cx="401.6" cy="308.2" r="0.9" fill="#dfe8df" opacity="0.8"/>
<rect x="338.4" y="165.5" width="3.2" height="17" fill="#1b4d22"/>
<rect x="339.6" y="166.5" width="0.8" height="15" fill="#5aa060" opacity="0.6"/>
<circle cx="340" cy="174" r="0.9" fill="#dfe8df" opacity="0.8"/>
<rect x="305.0" y="319.1" width="3.2" height="19" fill="#1b4d22"/>
<rect x="306.20000000000005" y="320.1" width="0.8" height="17" fill="#5aa060" opacity="0.6"/>
<circle cx="306.6" cy="328.6" r="0.9" fill="#dfe8df" opacity="0.8"/>
<rect x="444.4" y="212.2" width="3.2" height="19" fill="#0f428c"/>
<rect x="445.6" y="213.2" width="0.8" height="17" fill="#5a8ccc" opacity="0.6"/>
<circle cx="446" cy="221.7" r="0.9" fill="#dfe8df" opacity="0.8"/>
<rect x="485.4" y="128.5" width="3.2" height="19" fill="#0f428c"/>
<rect x="486.6" y="129.5" width="0.8" height="17" fill="#5a8ccc" opacity="0.6"/>
<circle cx="487" cy="138" r="0.9" fill="#dfe8df" opacity="0.8"/>
<rect x="647.0" y="128.5" width="3.2" height="19" fill="#0f428c"/>
<rect x="648.2" y="129.5" width="0.8" height="17" fill="#5a8ccc" opacity="0.6"/>
<circle cx="648.6" cy="138" r="0.9" fill="#dfe8df" opacity="0.8"/>
<rect x="457.1" y="157.3" width="19" height="3.2" fill="#0f428c"/>
<rect x="458.1" y="158.5" width="17" height="0.8" fill="#5a8ccc" opacity="0.6"/>
<circle cx="466.6" cy="158.9" r="0.9" fill="#dfe8df" opacity="0.8"/>
<rect x="457.1" y="199.20000000000002" width="19" height="3.2" fill="#0f428c"/>
<rect x="458.1" y="200.4" width="17" height="0.8" fill="#5a8ccc" opacity="0.6"/>
<circle cx="466.6" cy="200.8" r="0.9" fill="#dfe8df" opacity="0.8"/>
<rect x="477.29999999999995" y="237.8" width="3.2" height="19" fill="#1f3f78"/>
<rect x="478.5" y="238.8" width="0.8" height="17" fill="#6a92c0" opacity="0.6"/>
<circle cx="478.9" cy="247.3" r="0.9" fill="#dfe8df" opacity="0.8"/>
<rect x="608.4" y="237.1" width="3.2" height="19" fill="#1f3f78"/>
<rect x="609.6" y="238.1" width="0.8" height="17" fill="#6a92c0" opacity="0.6"/>
<circle cx="610" cy="246.6" r="0.9" fill="#dfe8df" opacity="0.8"/>
<rect x="644.8" y="237.1" width="3.2" height="19" fill="#1f3f78"/>
<rect x="646.0" y="238.1" width="0.8" height="17" fill="#6a92c0" opacity="0.6"/>
<circle cx="646.4" cy="246.6" r="0.9" fill="#dfe8df" opacity="0.8"/>
<rect x="490.0" y="224.4" width="19" height="3.2" fill="#1f3f78"/>
<rect x="491.0" y="225.6" width="17" height="0.8" fill="#6a92c0" opacity="0.6"/>
<circle cx="499.5" cy="226" r="0.9" fill="#dfe8df" opacity="0.8"/>
<rect x="490.0" y="266.2" width="19" height="3.2" fill="#1f3f78"/>
<rect x="491.0" y="267.40000000000003" width="17" height="0.8" fill="#6a92c0" opacity="0.6"/>
<circle cx="499.5" cy="267.8" r="0.9" fill="#dfe8df" opacity="0.8"/>
<rect x="580.0" y="224.0" width="19" height="3.2" fill="#1f3f78"/>
<rect x="581.0" y="225.2" width="17" height="0.8" fill="#6a92c0" opacity="0.6"/>
<circle cx="589.5" cy="225.6" r="0.9" fill="#dfe8df" opacity="0.8"/>
<rect x="580.0" y="266.2" width="19" height="3.2" fill="#1f3f78"/>
<rect x="581.0" y="267.40000000000003" width="17" height="0.8" fill="#6a92c0" opacity="0.6"/>
<circle cx="589.5" cy="267.8" r="0.9" fill="#dfe8df" opacity="0.8"/>
<g transform="translate(544.6,204.5)">
<rect x="10" y="-6" width="12.5" height="12.5" fill="#1b3c8a"/>
<rect x="12" y="-2.3" width="10" height="4.4" fill="#5a76b6"/>
<rect x="12" y="-0.8" width="10" height="1.4" fill="#9fb2de"/>
<path d="M-22,-5.5 L-10,-9 L-4,13 L4,14.5 L-22,6.5 Z" fill="#1b3c8a"/>
<path d="M-21,-2.2 L-12,-3.8 L-9,4 L-21,2.6 Z" fill="#5a76b6"/>
<path d="M-21,-0.7 L-12,-1.5 L-11,1.4 L-21,1.1 Z" fill="#9fb2de"/>
<path d="M-26,-9.5 Q-26,-10 -25,-10 L-22.5,-8.5 L-22.5,9.5 L-25,11 Q-26,11 -26,10.5 Z" fill="#163585"/>
<path d="M26,-9.5 Q26,-10 25,-10 L22.5,-8.5 L22.5,9.5 L25,11 Q26,11 26,10.5 Z" fill="#163585"/>
<rect x="-25.2" y="-1" width="1.2" height="2" fill="#7f9ad0"/><rect x="24" y="-1" width="1.2" height="2" fill="#7f9ad0"/>
<path d="M-7.5,15 L6.5,15 L7,24 L-8,24 Z" fill="#90a6d8"/>
<rect x="-7.5" y="14.5" width="14" height="2.2" fill="#1a2a66"/>
<circle cx="-0.5" cy="20.2" r="2.5" fill="#c8c8c8" stroke="#4a4a4a" stroke-width="0.9"/>
<circle cx="0" cy="0" r="14.2" fill="#183a8a"/>
<circle cx="0" cy="0" r="12.7" fill="#86a0d6"/>
<circle cx="0" cy="0" r="10.6" fill="#28499a"/>
<circle cx="0" cy="0" r="9.8" fill="#b5c3e4"/>
<circle cx="0" cy="0" r="9.1" fill="#cfcfd0"/>
<path d="M0.8,-2.2 Q5.8,-3.2 6.6,-8.0" transform="rotate(0.0)" fill="none" stroke="#555" stroke-width="1.15" stroke-linecap="round"/>
<path d="M1.8,-2.9 Q6.6,-3.9 7.6,-7.3" transform="rotate(0.0)" fill="none" stroke="#f4f4f4" stroke-width="0.5" opacity="0.9"/>
<path d="M0.8,-2.2 Q5.8,-3.2 6.6,-8.0" transform="rotate(32.7)" fill="none" stroke="#555" stroke-width="1.15" stroke-linecap="round"/>
<path d="M1.8,-2.9 Q6.6,-3.9 7.6,-7.3" transform="rotate(32.7)" fill="none" stroke="#f4f4f4" stroke-width="0.5" opacity="0.9"/>
<path d="M0.8,-2.2 Q5.8,-3.2 6.6,-8.0" transform="rotate(65.5)" fill="none" stroke="#555" stroke-width="1.15" stroke-linecap="round"/>
<path d="M1.8,-2.9 Q6.6,-3.9 7.6,-7.3" transform="rotate(65.5)" fill="none" stroke="#f4f4f4" stroke-width="0.5" opacity="0.9"/>
<path d="M0.8,-2.2 Q5.8,-3.2 6.6,-8.0" transform="rotate(98.2)" fill="none" stroke="#555" stroke-width="1.15" stroke-linecap="round"/>
<path d="M1.8,-2.9 Q6.6,-3.9 7.6,-7.3" transform="rotate(98.2)" fill="none" stroke="#f4f4f4" stroke-width="0.5" opacity="0.9"/>
<path d="M0.8,-2.2 Q5.8,-3.2 6.6,-8.0" transform="rotate(130.9)" fill="none" stroke="#555" stroke-width="1.15" stroke-linecap="round"/>
<path d="M1.8,-2.9 Q6.6,-3.9 7.6,-7.3" transform="rotate(130.9)" fill="none" stroke="#f4f4f4" stroke-width="0.5" opacity="0.9"/>
<path d="M0.8,-2.2 Q5.8,-3.2 6.6,-8.0" transform="rotate(163.6)" fill="none" stroke="#555" stroke-width="1.15" stroke-linecap="round"/>
<path d="M1.8,-2.9 Q6.6,-3.9 7.6,-7.3" transform="rotate(163.6)" fill="none" stroke="#f4f4f4" stroke-width="0.5" opacity="0.9"/>
<path d="M0.8,-2.2 Q5.8,-3.2 6.6,-8.0" transform="rotate(196.4)" fill="none" stroke="#555" stroke-width="1.15" stroke-linecap="round"/>
<path d="M1.8,-2.9 Q6.6,-3.9 7.6,-7.3" transform="rotate(196.4)" fill="none" stroke="#f4f4f4" stroke-width="0.5" opacity="0.9"/>
<path d="M0.8,-2.2 Q5.8,-3.2 6.6,-8.0" transform="rotate(229.1)" fill="none" stroke="#555" stroke-width="1.15" stroke-linecap="round"/>
<path d="M1.8,-2.9 Q6.6,-3.9 7.6,-7.3" transform="rotate(229.1)" fill="none" stroke="#f4f4f4" stroke-width="0.5" opacity="0.9"/>
<path d="M0.8,-2.2 Q5.8,-3.2 6.6,-8.0" transform="rotate(261.8)" fill="none" stroke="#555" stroke-width="1.15" stroke-linecap="round"/>
<path d="M1.8,-2.9 Q6.6,-3.9 7.6,-7.3" transform="rotate(261.8)" fill="none" stroke="#f4f4f4" stroke-width="0.5" opacity="0.9"/>
<path d="M0.8,-2.2 Q5.8,-3.2 6.6,-8.0" transform="rotate(294.5)" fill="none" stroke="#555" stroke-width="1.15" stroke-linecap="round"/>
<path d="M1.8,-2.9 Q6.6,-3.9 7.6,-7.3" transform="rotate(294.5)" fill="none" stroke="#f4f4f4" stroke-width="0.5" opacity="0.9"/>
<path d="M0.8,-2.2 Q5.8,-3.2 6.6,-8.0" transform="rotate(327.3)" fill="none" stroke="#555" stroke-width="1.15" stroke-linecap="round"/>
<path d="M1.8,-2.9 Q6.6,-3.9 7.6,-7.3" transform="rotate(327.3)" fill="none" stroke="#f4f4f4" stroke-width="0.5" opacity="0.9"/>
<circle cx="0" cy="0" r="1.7" fill="#0e0e0e"/>
</g>
<g transform="translate(544.6,288.5)">
<rect x="10" y="-6" width="12.5" height="12.5" fill="#1b3c8a"/>
<rect x="12" y="-2.3" width="10" height="4.4" fill="#5a76b6"/>
<rect x="12" y="-0.8" width="10" height="1.4" fill="#9fb2de"/>
<path d="M-22,-5.5 L-10,-9 L-4,13 L4,14.5 L-22,6.5 Z" fill="#1b3c8a"/>
<path d="M-21,-2.2 L-12,-3.8 L-9,4 L-21,2.6 Z" fill="#5a76b6"/>
<path d="M-21,-0.7 L-12,-1.5 L-11,1.4 L-21,1.1 Z" fill="#9fb2de"/>
<path d="M-26,-9.5 Q-26,-10 -25,-10 L-22.5,-8.5 L-22.5,9.5 L-25,11 Q-26,11 -26,10.5 Z" fill="#163585"/>
<path d="M26,-9.5 Q26,-10 25,-10 L22.5,-8.5 L22.5,9.5 L25,11 Q26,11 26,10.5 Z" fill="#163585"/>
<rect x="-25.2" y="-1" width="1.2" height="2" fill="#7f9ad0"/><rect x="24" y="-1" width="1.2" height="2" fill="#7f9ad0"/>
<path d="M-7.5,15 L6.5,15 L7,24 L-8,24 Z" fill="#90a6d8"/>
<rect x="-7.5" y="14.5" width="14" height="2.2" fill="#1a2a66"/>
<circle cx="-0.5" cy="20.2" r="2.5" fill="#c8c8c8" stroke="#4a4a4a" stroke-width="0.9"/>
<circle cx="0" cy="0" r="14.2" fill="#183a8a"/>
<circle cx="0" cy="0" r="12.7" fill="#86a0d6"/>
<circle cx="0" cy="0" r="10.6" fill="#28499a"/>
<circle cx="0" cy="0" r="9.8" fill="#b5c3e4"/>
<circle cx="0" cy="0" r="9.1" fill="#cfcfd0"/>
<path d="M0.8,-2.2 Q5.8,-3.2 6.6,-8.0" transform="rotate(0.0)" fill="none" stroke="#555" stroke-width="1.15" stroke-linecap="round"/>
<path d="M1.8,-2.9 Q6.6,-3.9 7.6,-7.3" transform="rotate(0.0)" fill="none" stroke="#f4f4f4" stroke-width="0.5" opacity="0.9"/>
<path d="M0.8,-2.2 Q5.8,-3.2 6.6,-8.0" transform="rotate(32.7)" fill="none" stroke="#555" stroke-width="1.15" stroke-linecap="round"/>
<path d="M1.8,-2.9 Q6.6,-3.9 7.6,-7.3" transform="rotate(32.7)" fill="none" stroke="#f4f4f4" stroke-width="0.5" opacity="0.9"/>
<path d="M0.8,-2.2 Q5.8,-3.2 6.6,-8.0" transform="rotate(65.5)" fill="none" stroke="#555" stroke-width="1.15" stroke-linecap="round"/>
<path d="M1.8,-2.9 Q6.6,-3.9 7.6,-7.3" transform="rotate(65.5)" fill="none" stroke="#f4f4f4" stroke-width="0.5" opacity="0.9"/>
<path d="M0.8,-2.2 Q5.8,-3.2 6.6,-8.0" transform="rotate(98.2)" fill="none" stroke="#555" stroke-width="1.15" stroke-linecap="round"/>
<path d="M1.8,-2.9 Q6.6,-3.9 7.6,-7.3" transform="rotate(98.2)" fill="none" stroke="#f4f4f4" stroke-width="0.5" opacity="0.9"/>
<path d="M0.8,-2.2 Q5.8,-3.2 6.6,-8.0" transform="rotate(130.9)" fill="none" stroke="#555" stroke-width="1.15" stroke-linecap="round"/>
<path d="M1.8,-2.9 Q6.6,-3.9 7.6,-7.3" transform="rotate(130.9)" fill="none" stroke="#f4f4f4" stroke-width="0.5" opacity="0.9"/>
<path d="M0.8,-2.2 Q5.8,-3.2 6.6,-8.0" transform="rotate(163.6)" fill="none" stroke="#555" stroke-width="1.15" stroke-linecap="round"/>
<path d="M1.8,-2.9 Q6.6,-3.9 7.6,-7.3" transform="rotate(163.6)" fill="none" stroke="#f4f4f4" stroke-width="0.5" opacity="0.9"/>
<path d="M0.8,-2.2 Q5.8,-3.2 6.6,-8.0" transform="rotate(196.4)" fill="none" stroke="#555" stroke-width="1.15" stroke-linecap="round"/>
<path d="M1.8,-2.9 Q6.6,-3.9 7.6,-7.3" transform="rotate(196.4)" fill="none" stroke="#f4f4f4" stroke-width="0.5" opacity="0.9"/>
<path d="M0.8,-2.2 Q5.8,-3.2 6.6,-8.0" transform="rotate(229.1)" fill="none" stroke="#555" stroke-width="1.15" stroke-linecap="round"/>
<path d="M1.8,-2.9 Q6.6,-3.9 7.6,-7.3" transform="rotate(229.1)" fill="none" stroke="#f4f4f4" stroke-width="0.5" opacity="0.9"/>
<path d="M0.8,-2.2 Q5.8,-3.2 6.6,-8.0" transform="rotate(261.8)" fill="none" stroke="#555" stroke-width="1.15" stroke-linecap="round"/>
<path d="M1.8,-2.9 Q6.6,-3.9 7.6,-7.3" transform="rotate(261.8)" fill="none" stroke="#f4f4f4" stroke-width="0.5" opacity="0.9"/>
<path d="M0.8,-2.2 Q5.8,-3.2 6.6,-8.0" transform="rotate(294.5)" fill="none" stroke="#555" stroke-width="1.15" stroke-linecap="round"/>
<path d="M1.8,-2.9 Q6.6,-3.9 7.6,-7.3" transform="rotate(294.5)" fill="none" stroke="#f4f4f4" stroke-width="0.5" opacity="0.9"/>
<path d="M0.8,-2.2 Q5.8,-3.2 6.6,-8.0" transform="rotate(327.3)" fill="none" stroke="#555" stroke-width="1.15" stroke-linecap="round"/>
<path d="M1.8,-2.9 Q6.6,-3.9 7.6,-7.3" transform="rotate(327.3)" fill="none" stroke="#f4f4f4" stroke-width="0.5" opacity="0.9"/>
<circle cx="0" cy="0" r="1.7" fill="#0e0e0e"/>
</g>
<g transform="translate(506,386.8)">
<rect x="10" y="-6" width="12.5" height="12.5" fill="#1b3c8a"/>
<rect x="12" y="-2.3" width="10" height="4.4" fill="#5a76b6"/>
<rect x="12" y="-0.8" width="10" height="1.4" fill="#9fb2de"/>
<path d="M-22,-5.5 L-10,-9 L-4,13 L4,14.5 L-22,6.5 Z" fill="#1b3c8a"/>
<path d="M-21,-2.2 L-12,-3.8 L-9,4 L-21,2.6 Z" fill="#5a76b6"/>
<path d="M-21,-0.7 L-12,-1.5 L-11,1.4 L-21,1.1 Z" fill="#9fb2de"/>
<path d="M-26,-9.5 Q-26,-10 -25,-10 L-22.5,-8.5 L-22.5,9.5 L-25,11 Q-26,11 -26,10.5 Z" fill="#163585"/>
<path d="M26,-9.5 Q26,-10 25,-10 L22.5,-8.5 L22.5,9.5 L25,11 Q26,11 26,10.5 Z" fill="#163585"/>
<rect x="-25.2" y="-1" width="1.2" height="2" fill="#7f9ad0"/><rect x="24" y="-1" width="1.2" height="2" fill="#7f9ad0"/>
<path d="M-7.5,15 L6.5,15 L7,24 L-8,24 Z" fill="#90a6d8"/>
<rect x="-7.5" y="14.5" width="14" height="2.2" fill="#1a2a66"/>
<circle cx="-0.5" cy="20.2" r="2.5" fill="#c8c8c8" stroke="#4a4a4a" stroke-width="0.9"/>
<circle cx="0" cy="0" r="14.2" fill="#183a8a"/>
<circle cx="0" cy="0" r="12.7" fill="#86a0d6"/>
<circle cx="0" cy="0" r="10.6" fill="#28499a"/>
<circle cx="0" cy="0" r="9.8" fill="#b5c3e4"/>
<circle cx="0" cy="0" r="9.1" fill="#cfcfd0"/>
<path d="M0.8,-2.2 Q5.8,-3.2 6.6,-8.0" transform="rotate(0.0)" fill="none" stroke="#555" stroke-width="1.15" stroke-linecap="round"/>
<path d="M1.8,-2.9 Q6.6,-3.9 7.6,-7.3" transform="rotate(0.0)" fill="none" stroke="#f4f4f4" stroke-width="0.5" opacity="0.9"/>
<path d="M0.8,-2.2 Q5.8,-3.2 6.6,-8.0" transform="rotate(32.7)" fill="none" stroke="#555" stroke-width="1.15" stroke-linecap="round"/>
<path d="M1.8,-2.9 Q6.6,-3.9 7.6,-7.3" transform="rotate(32.7)" fill="none" stroke="#f4f4f4" stroke-width="0.5" opacity="0.9"/>
<path d="M0.8,-2.2 Q5.8,-3.2 6.6,-8.0" transform="rotate(65.5)" fill="none" stroke="#555" stroke-width="1.15" stroke-linecap="round"/>
<path d="M1.8,-2.9 Q6.6,-3.9 7.6,-7.3" transform="rotate(65.5)" fill="none" stroke="#f4f4f4" stroke-width="0.5" opacity="0.9"/>
<path d="M0.8,-2.2 Q5.8,-3.2 6.6,-8.0" transform="rotate(98.2)" fill="none" stroke="#555" stroke-width="1.15" stroke-linecap="round"/>
<path d="M1.8,-2.9 Q6.6,-3.9 7.6,-7.3" transform="rotate(98.2)" fill="none" stroke="#f4f4f4" stroke-width="0.5" opacity="0.9"/>
<path d="M0.8,-2.2 Q5.8,-3.2 6.6,-8.0" transform="rotate(130.9)" fill="none" stroke="#555" stroke-width="1.15" stroke-linecap="round"/>
<path d="M1.8,-2.9 Q6.6,-3.9 7.6,-7.3" transform="rotate(130.9)" fill="none" stroke="#f4f4f4" stroke-width="0.5" opacity="0.9"/>
<path d="M0.8,-2.2 Q5.8,-3.2 6.6,-8.0" transform="rotate(163.6)" fill="none" stroke="#555" stroke-width="1.15" stroke-linecap="round"/>
<path d="M1.8,-2.9 Q6.6,-3.9 7.6,-7.3" transform="rotate(163.6)" fill="none" stroke="#f4f4f4" stroke-width="0.5" opacity="0.9"/>
<path d="M0.8,-2.2 Q5.8,-3.2 6.6,-8.0" transform="rotate(196.4)" fill="none" stroke="#555" stroke-width="1.15" stroke-linecap="round"/>
<path d="M1.8,-2.9 Q6.6,-3.9 7.6,-7.3" transform="rotate(196.4)" fill="none" stroke="#f4f4f4" stroke-width="0.5" opacity="0.9"/>
<path d="M0.8,-2.2 Q5.8,-3.2 6.6,-8.0" transform="rotate(229.1)" fill="none" stroke="#555" stroke-width="1.15" stroke-linecap="round"/>
<path d="M1.8,-2.9 Q6.6,-3.9 7.6,-7.3" transform="rotate(229.1)" fill="none" stroke="#f4f4f4" stroke-width="0.5" opacity="0.9"/>
<path d="M0.8,-2.2 Q5.8,-3.2 6.6,-8.0" transform="rotate(261.8)" fill="none" stroke="#555" stroke-width="1.15" stroke-linecap="round"/>
<path d="M1.8,-2.9 Q6.6,-3.9 7.6,-7.3" transform="rotate(261.8)" fill="none" stroke="#f4f4f4" stroke-width="0.5" opacity="0.9"/>
<path d="M0.8,-2.2 Q5.8,-3.2 6.6,-8.0" transform="rotate(294.5)" fill="none" stroke="#555" stroke-width="1.15" stroke-linecap="round"/>
<path d="M1.8,-2.9 Q6.6,-3.9 7.6,-7.3" transform="rotate(294.5)" fill="none" stroke="#f4f4f4" stroke-width="0.5" opacity="0.9"/>
<path d="M0.8,-2.2 Q5.8,-3.2 6.6,-8.0" transform="rotate(327.3)" fill="none" stroke="#555" stroke-width="1.15" stroke-linecap="round"/>
<path d="M1.8,-2.9 Q6.6,-3.9 7.6,-7.3" transform="rotate(327.3)" fill="none" stroke="#f4f4f4" stroke-width="0.5" opacity="0.9"/>
<circle cx="0" cy="0" r="1.7" fill="#0e0e0e"/>
</g>
<g transform="translate(506,470.3)">
<rect x="10" y="-6" width="12.5" height="12.5" fill="#1b3c8a"/>
<rect x="12" y="-2.3" width="10" height="4.4" fill="#5a76b6"/>
<rect x="12" y="-0.8" width="10" height="1.4" fill="#9fb2de"/>
<path d="M-22,-5.5 L-10,-9 L-4,13 L4,14.5 L-22,6.5 Z" fill="#1b3c8a"/>
<path d="M-21,-2.2 L-12,-3.8 L-9,4 L-21,2.6 Z" fill="#5a76b6"/>
<path d="M-21,-0.7 L-12,-1.5 L-11,1.4 L-21,1.1 Z" fill="#9fb2de"/>
<path d="M-26,-9.5 Q-26,-10 -25,-10 L-22.5,-8.5 L-22.5,9.5 L-25,11 Q-26,11 -26,10.5 Z" fill="#163585"/>
<path d="M26,-9.5 Q26,-10 25,-10 L22.5,-8.5 L22.5,9.5 L25,11 Q26,11 26,10.5 Z" fill="#163585"/>
<rect x="-25.2" y="-1" width="1.2" height="2" fill="#7f9ad0"/><rect x="24" y="-1" width="1.2" height="2" fill="#7f9ad0"/>
<path d="M-7.5,15 L6.5,15 L7,24 L-8,24 Z" fill="#90a6d8"/>
<rect x="-7.5" y="14.5" width="14" height="2.2" fill="#1a2a66"/>
<circle cx="-0.5" cy="20.2" r="2.5" fill="#c8c8c8" stroke="#4a4a4a" stroke-width="0.9"/>
<circle cx="0" cy="0" r="14.2" fill="#183a8a"/>
<circle cx="0" cy="0" r="12.7" fill="#86a0d6"/>
<circle cx="0" cy="0" r="10.6" fill="#28499a"/>
<circle cx="0" cy="0" r="9.8" fill="#b5c3e4"/>
<circle cx="0" cy="0" r="9.1" fill="#cfcfd0"/>
<path d="M0.8,-2.2 Q5.8,-3.2 6.6,-8.0" transform="rotate(0.0)" fill="none" stroke="#555" stroke-width="1.15" stroke-linecap="round"/>
<path d="M1.8,-2.9 Q6.6,-3.9 7.6,-7.3" transform="rotate(0.0)" fill="none" stroke="#f4f4f4" stroke-width="0.5" opacity="0.9"/>
<path d="M0.8,-2.2 Q5.8,-3.2 6.6,-8.0" transform="rotate(32.7)" fill="none" stroke="#555" stroke-width="1.15" stroke-linecap="round"/>
<path d="M1.8,-2.9 Q6.6,-3.9 7.6,-7.3" transform="rotate(32.7)" fill="none" stroke="#f4f4f4" stroke-width="0.5" opacity="0.9"/>
<path d="M0.8,-2.2 Q5.8,-3.2 6.6,-8.0" transform="rotate(65.5)" fill="none" stroke="#555" stroke-width="1.15" stroke-linecap="round"/>
<path d="M1.8,-2.9 Q6.6,-3.9 7.6,-7.3" transform="rotate(65.5)" fill="none" stroke="#f4f4f4" stroke-width="0.5" opacity="0.9"/>
<path d="M0.8,-2.2 Q5.8,-3.2 6.6,-8.0" transform="rotate(98.2)" fill="none" stroke="#555" stroke-width="1.15" stroke-linecap="round"/>
<path d="M1.8,-2.9 Q6.6,-3.9 7.6,-7.3" transform="rotate(98.2)" fill="none" stroke="#f4f4f4" stroke-width="0.5" opacity="0.9"/>
<path d="M0.8,-2.2 Q5.8,-3.2 6.6,-8.0" transform="rotate(130.9)" fill="none" stroke="#555" stroke-width="1.15" stroke-linecap="round"/>
<path d="M1.8,-2.9 Q6.6,-3.9 7.6,-7.3" transform="rotate(130.9)" fill="none" stroke="#f4f4f4" stroke-width="0.5" opacity="0.9"/>
<path d="M0.8,-2.2 Q5.8,-3.2 6.6,-8.0" transform="rotate(163.6)" fill="none" stroke="#555" stroke-width="1.15" stroke-linecap="round"/>
<path d="M1.8,-2.9 Q6.6,-3.9 7.6,-7.3" transform="rotate(163.6)" fill="none" stroke="#f4f4f4" stroke-width="0.5" opacity="0.9"/>
<path d="M0.8,-2.2 Q5.8,-3.2 6.6,-8.0" transform="rotate(196.4)" fill="none" stroke="#555" stroke-width="1.15" stroke-linecap="round"/>
<path d="M1.8,-2.9 Q6.6,-3.9 7.6,-7.3" transform="rotate(196.4)" fill="none" stroke="#f4f4f4" stroke-width="0.5" opacity="0.9"/>
<path d="M0.8,-2.2 Q5.8,-3.2 6.6,-8.0" transform="rotate(229.1)" fill="none" stroke="#555" stroke-width="1.15" stroke-linecap="round"/>
<path d="M1.8,-2.9 Q6.6,-3.9 7.6,-7.3" transform="rotate(229.1)" fill="none" stroke="#f4f4f4" stroke-width="0.5" opacity="0.9"/>
<path d="M0.8,-2.2 Q5.8,-3.2 6.6,-8.0" transform="rotate(261.8)" fill="none" stroke="#555" stroke-width="1.15" stroke-linecap="round"/>
<path d="M1.8,-2.9 Q6.6,-3.9 7.6,-7.3" transform="rotate(261.8)" fill="none" stroke="#f4f4f4" stroke-width="0.5" opacity="0.9"/>
<path d="M0.8,-2.2 Q5.8,-3.2 6.6,-8.0" transform="rotate(294.5)" fill="none" stroke="#555" stroke-width="1.15" stroke-linecap="round"/>
<path d="M1.8,-2.9 Q6.6,-3.9 7.6,-7.3" transform="rotate(294.5)" fill="none" stroke="#f4f4f4" stroke-width="0.5" opacity="0.9"/>
<path d="M0.8,-2.2 Q5.8,-3.2 6.6,-8.0" transform="rotate(327.3)" fill="none" stroke="#555" stroke-width="1.15" stroke-linecap="round"/>
<path d="M1.8,-2.9 Q6.6,-3.9 7.6,-7.3" transform="rotate(327.3)" fill="none" stroke="#f4f4f4" stroke-width="0.5" opacity="0.9"/>
<circle cx="0" cy="0" r="1.7" fill="#0e0e0e"/>
</g>
<g transform="translate(363,200)">
<rect x="0" y="0" width="15.6" height="15.5" rx="1.2" fill="#c9c9c9"/>
<rect x="0.7" y="0.7" width="14.2" height="14.1" rx="1" fill="url(#tgrad)"/>
<rect x="4.1" y="2.9" width="7.8" height="2" fill="#0a0a0a"/>
<rect x="7" y="2.9" width="2.1" height="8.9" fill="#0a0a0a"/>
<rect x="4.9" y="15.5" width="5.4" height="2.7" fill="#6a6a6a"/>
<rect x="6.9" y="15.5" width="1.2" height="2.7" fill="#d0d0d0"/>
</g>
<g transform="translate(353.5,307)">
<rect x="0" y="0" width="15.6" height="15.5" rx="1.2" fill="#c9c9c9"/>
<rect x="0.7" y="0.7" width="14.2" height="14.1" rx="1" fill="url(#tgrad)"/>
<rect x="4.1" y="2.9" width="7.8" height="2" fill="#0a0a0a"/>
<rect x="7" y="2.9" width="2.1" height="8.9" fill="#0a0a0a"/>
<rect x="4.9" y="15.5" width="5.4" height="2.7" fill="#6a6a6a"/>
<rect x="6.9" y="15.5" width="1.2" height="2.7" fill="#d0d0d0"/>
</g>
<g transform="translate(484,324)">
<rect x="0" y="0" width="15.6" height="15.5" rx="1.2" fill="#c9c9c9"/>
<rect x="0.7" y="0.7" width="14.2" height="14.1" rx="1" fill="url(#tgrad)"/>
<rect x="4.1" y="2.9" width="7.8" height="2" fill="#0a0a0a"/>
<rect x="7" y="2.9" width="2.1" height="8.9" fill="#0a0a0a"/>
<rect x="4.9" y="15.5" width="5.4" height="2.7" fill="#6a6a6a"/>
<rect x="6.9" y="15.5" width="1.2" height="2.7" fill="#d0d0d0"/>
</g>
<g transform="translate(620.3,224.7)">
<rect x="0" y="0" width="15.6" height="15.5" rx="1.2" fill="#c9c9c9"/>
<rect x="0.7" y="0.7" width="14.2" height="14.1" rx="1" fill="url(#tgrad)"/>
<rect x="4.1" y="2.9" width="7.8" height="2" fill="#0a0a0a"/>
<rect x="7" y="2.9" width="2.1" height="8.9" fill="#0a0a0a"/>
<rect x="4.9" y="15.5" width="5.4" height="2.7" fill="#6a6a6a"/>
<rect x="6.9" y="15.5" width="1.2" height="2.7" fill="#d0d0d0"/>
</g>
</svg>

<div class="a" style="left:553px;top:85px;width:87px;height:39px;border-radius:3px;background:#c9c9c9;overflow:hidden">
  <svg class="a" style="left:4px;top:3.5px" width="12" height="12" viewBox="-6 -6 12 12"><path d="M0.00,-4.70 L1.38,-3.33 L3.32,-3.32 L3.33,-1.38 L4.70,0.00 L3.33,1.38 L3.32,3.32 L1.38,3.33 L0.00,4.70 L-1.38,3.33 L-3.32,3.32 L-3.33,1.38 L-4.70,0.00 L-3.33,-1.38 L-3.32,-3.32 L-1.38,-3.33Z" fill="none" stroke="#2a2a2a" stroke-width="0.95" stroke-linejoin="round"/><circle cx="0" cy="0" r="1.8" fill="none" stroke="#2a2a2a" stroke-width="0.9"/></svg>
  <div class="a" style="left:10px;top:1.5px;width:67px;text-align:center;font-size:8.2px;font-weight:bold;color:#1e1e1e;line-height:9px;transform:scaleX(.9)">DIFFERENTIAL<br>PRESSURE</div>
  <div class="a" style="left:0;top:20px;width:84px;height:19px;background:#3d8bbf;color:#fff;font-weight:bold;font-size:10.5px;line-height:19px;text-align:center"><span style="display:inline-block;transform:scaleX(.92)">448159.4 Pa</span></div>
  <div class="a" style="left:84px;top:20px;width:3px;height:19px;background:#4eaa52"></div>
</div>
<div class="hdr" style="top:78px"><svg class="ic" width="17" height="17" viewBox="0 0 17 17"><circle cx="8.5" cy="8.5" r="8.3" fill="#3a8cc4"/><rect x="5.3" y="4.3" width="6.4" height="4.4" rx="1" fill="none" stroke="#fff" stroke-width="1.3"/><rect x="8" y="8.6" width="1" height="2" fill="#fff"/><rect x="3.8" y="10.9" width="9.4" height="1.3" fill="#fff"/><rect x="7.4" y="10" width="2.2" height="2.6" fill="#fff"/></svg><span>Chiller Menu</span></div>
<div class="tbl" style="top:99px;height:205.5px">
<div class="row" style="top:4px"><svg class="gear" width="12" height="12" viewBox="-6 -6 12 12"><path d="M0.00,-4.70 L1.38,-3.33 L3.32,-3.32 L3.33,-1.38 L4.70,0.00 L3.33,1.38 L3.32,3.32 L1.38,3.33 L0.00,4.70 L-1.38,3.33 L-3.32,3.32 L-3.33,1.38 L-4.70,0.00 L-3.33,-1.38 L-3.32,-3.32 L-1.38,-3.33Z" fill="none" stroke="#2a2a2a" stroke-width="0.95" stroke-linejoin="round"/><circle cx="0" cy="0" r="1.8" fill="none" stroke="#2a2a2a" stroke-width="0.9"/></svg><div class="lbl"><span>CHILLER</span></div><div class="val">ON</div><div class="strip"></div></div>
<div class="row" style="top:26px"><div class="lbl"><span>CHILLER STATUS</span></div><div class="val">OFF</div><div class="strip"></div></div>
<div class="row" style="top:48px"><svg class="gear" width="12" height="12" viewBox="-6 -6 12 12"><path d="M0.00,-4.70 L1.38,-3.33 L3.32,-3.32 L3.33,-1.38 L4.70,0.00 L3.33,1.38 L3.32,3.32 L1.38,3.33 L0.00,4.70 L-1.38,3.33 L-3.32,3.32 L-3.33,1.38 L-4.70,0.00 L-3.33,-1.38 L-3.32,-3.32 L-1.38,-3.33Z" fill="none" stroke="#2a2a2a" stroke-width="0.95" stroke-linejoin="round"/><circle cx="0" cy="0" r="1.8" fill="none" stroke="#2a2a2a" stroke-width="0.9"/></svg><div class="lbl"><span>CW SP</span></div><div class="val two"><span style="position:relative;top:-1.3px">468843.7<br>Pa</span></div><div class="strip"></div></div>
<div class="row" style="top:70px"><svg class="gear" width="12" height="12" viewBox="-6 -6 12 12"><path d="M0.00,-4.70 L1.38,-3.33 L3.32,-3.32 L3.33,-1.38 L4.70,0.00 L3.33,1.38 L3.32,3.32 L1.38,3.33 L0.00,4.70 L-1.38,3.33 L-3.32,3.32 L-3.33,1.38 L-4.70,0.00 L-3.33,-1.38 L-3.32,-3.32 L-1.38,-3.33Z" fill="none" stroke="#2a2a2a" stroke-width="0.95" stroke-linejoin="round"/><circle cx="0" cy="0" r="1.8" fill="none" stroke="#2a2a2a" stroke-width="0.9"/></svg><div class="lbl"><span>CWP1</span></div><div class="val">OFF</div><div class="strip"></div></div>
<div class="row" style="top:92px"><div class="lbl"><span>CWP1 STATUS</span></div><div class="val">ON</div><div class="strip"></div></div>
<div class="row" style="top:114px"><svg class="gear" width="12" height="12" viewBox="-6 -6 12 12"><path d="M0.00,-4.70 L1.38,-3.33 L3.32,-3.32 L3.33,-1.38 L4.70,0.00 L3.33,1.38 L3.32,3.32 L1.38,3.33 L0.00,4.70 L-1.38,3.33 L-3.32,3.32 L-3.33,1.38 L-4.70,0.00 L-3.33,-1.38 L-3.32,-3.32 L-1.38,-3.33Z" fill="none" stroke="#2a2a2a" stroke-width="0.95" stroke-linejoin="round"/><circle cx="0" cy="0" r="1.8" fill="none" stroke="#2a2a2a" stroke-width="0.9"/></svg><div class="lbl"><span>CWP2</span></div><div class="val">ON</div><div class="strip"></div></div>
<div class="row" style="top:136px"><div class="lbl"><span>CWP2 STATUS</span></div><div class="val">ON</div><div class="strip"></div></div>
<div class="row" style="top:158px"><div class="lbl"><span>CWR-T</span></div><div class="val">10.4 °C</div><div class="strip"></div></div>
<div class="row" style="top:180px"><div class="lbl"><span>CWS-T</span></div><div class="val">3.3 °C</div><div class="strip"></div></div>
</div>
<div class="hdr" style="top:331px"><svg class="ic" width="17" height="17" viewBox="0 0 17 17"><circle cx="8.5" cy="8.5" r="8.3" fill="#3a8cc4"/><rect x="5.3" y="4.3" width="6.4" height="4.4" rx="1" fill="none" stroke="#fff" stroke-width="1.3"/><rect x="8" y="8.6" width="1" height="2" fill="#fff"/><rect x="3.8" y="10.9" width="9.4" height="1.3" fill="#fff"/><rect x="7.4" y="10" width="2.2" height="2.6" fill="#fff"/></svg><span>Cooling Tower Menu</span></div>
<div class="tbl" style="top:352px;height:182.5px">
<div class="row" style="top:4px"><svg class="gear" width="12" height="12" viewBox="-6 -6 12 12"><path d="M0.00,-4.70 L1.38,-3.33 L3.32,-3.32 L3.33,-1.38 L4.70,0.00 L3.33,1.38 L3.32,3.32 L1.38,3.33 L0.00,4.70 L-1.38,3.33 L-3.32,3.32 L-3.33,1.38 L-4.70,0.00 L-3.33,-1.38 L-3.32,-3.32 L-1.38,-3.33Z" fill="none" stroke="#2a2a2a" stroke-width="0.95" stroke-linejoin="round"/><circle cx="0" cy="0" r="1.8" fill="none" stroke="#2a2a2a" stroke-width="0.9"/></svg><div class="lbl"><span>CTOWER</span></div><div class="val">OFF</div><div class="strip"></div></div>
<div class="row" style="top:26px"><div class="lbl"><span>CTOWER STATUS</span></div><div class="val">ON</div><div class="strip"></div></div>
<div class="row" style="top:48px"><svg class="gear" width="12" height="12" viewBox="-6 -6 12 12"><path d="M0.00,-4.70 L1.38,-3.33 L3.32,-3.32 L3.33,-1.38 L4.70,0.00 L3.33,1.38 L3.32,3.32 L1.38,3.33 L0.00,4.70 L-1.38,3.33 L-3.32,3.32 L-3.33,1.38 L-4.70,0.00 L-3.33,-1.38 L-3.32,-3.32 L-1.38,-3.33Z" fill="none" stroke="#2a2a2a" stroke-width="0.95" stroke-linejoin="round"/><circle cx="0" cy="0" r="1.8" fill="none" stroke="#2a2a2a" stroke-width="0.9"/></svg><div class="lbl"><span>CTP1</span></div><div class="val">ON</div><div class="strip"></div></div>
<div class="row" style="top:70px"><div class="lbl"><span>CTP1 STATUS</span></div><div class="val">OFF</div><div class="strip"></div></div>
<div class="row" style="top:92px"><svg class="gear" width="12" height="12" viewBox="-6 -6 12 12"><path d="M0.00,-4.70 L1.38,-3.33 L3.32,-3.32 L3.33,-1.38 L4.70,0.00 L3.33,1.38 L3.32,3.32 L1.38,3.33 L0.00,4.70 L-1.38,3.33 L-3.32,3.32 L-3.33,1.38 L-4.70,0.00 L-3.33,-1.38 L-3.32,-3.32 L-1.38,-3.33Z" fill="none" stroke="#2a2a2a" stroke-width="0.95" stroke-linejoin="round"/><circle cx="0" cy="0" r="1.8" fill="none" stroke="#2a2a2a" stroke-width="0.9"/></svg><div class="lbl"><span>CTP2</span></div><div class="val">OFF</div><div class="strip"></div></div>
<div class="row" style="top:114px"><div class="lbl"><span>CTP2 STATUS</span></div><div class="val">ON</div><div class="strip"></div></div>
<div class="row" style="top:136px"><div class="lbl"><span>CTR-T</span></div><div class="val">3.2 °C</div><div class="strip"></div></div>
<div class="row" style="top:158px"><div class="lbl"><span>CTS-T</span></div><div class="val">4.0 °C</div><div class="strip"></div></div>
</div>
</body></html>
